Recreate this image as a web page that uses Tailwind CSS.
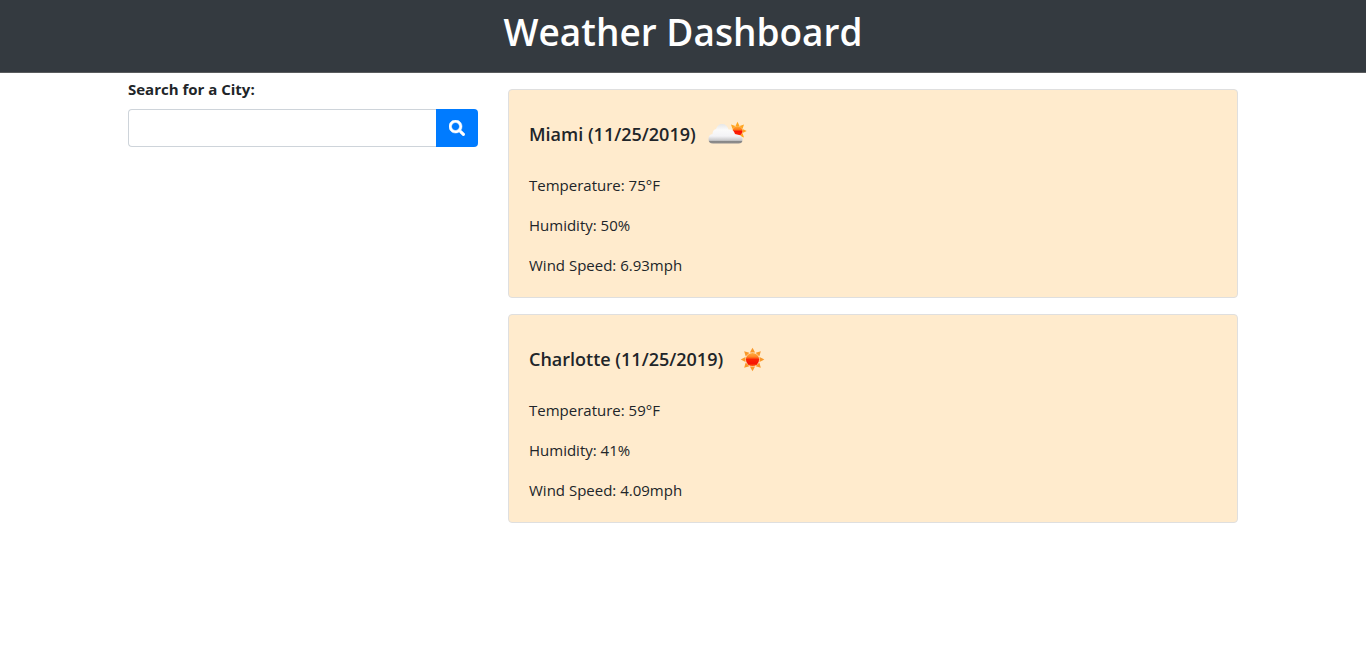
<!DOCTYPE html>
<html lang="en">
<head>
<meta charset="utf-8">
<meta name="viewport" content="width=device-width, initial-scale=1">
<title>Weather Dashboard</title>
<script src="https://cdn.jsdelivr.net/npm/@tailwindcss/browser@4"></script>
</head>
<body class="bg-white font-['Segoe_UI','Open_Sans','Noto_Sans',sans-serif] text-[15px] leading-6 text-[#212529]">
<header class="border-b border-[#5a5c5e] bg-[#343a40] pt-2 pb-4 text-center text-white">
  <h1 class="text-[37px] leading-[48px] font-semibold">Weather Dashboard</h1>
</header>
<main class="mx-auto grid max-w-[1140px] grid-cols-1 gap-x-[30px] px-[15px] md:grid-cols-[350px_1fr]">
  <form class="pt-1">
    <label for="city" class="mb-2 block font-bold">Search for a City:</label>
    <div class="flex h-[38px]">
      <input id="city" type="text" class="min-w-0 flex-1 rounded-l border border-r-0 border-[#ced4da] bg-white px-3 outline-none">
      <button type="button" aria-label="Search" class="flex w-[42px] items-center justify-center rounded-r bg-[#007bff] text-white">
        <svg class="size-4" viewBox="0 0 512 512" fill="currentColor" aria-hidden="true"><path stroke="currentColor" stroke-width="16" d="M505 442.700L405.300 343c-4.500-4.500-10.600-7-17-7H372c27.600-35.300 44-79.700 44-128C416 93.100 322.900 0 208 0S0 93.100 0 208s93.100 208 208 208c48.300 0 92.700-16.400 128-44v16.300c0 6.400 2.500 12.500 7 17l99.700 99.700c9.400 9.400 24.600 9.400 33.900 0l28.300-28.300c9.400-9.400 9.400-24.600.1-34zM208 336c-70.700 0-128-57.200-128-128 0-70.700 57.200-128 128-128 70.700 0 128 57.200 128 128 0 70.700-57.200 128-128 128z"/></svg>
      </button>
    </div>
  </form>
  <div class="flex flex-col gap-4 pt-4">
    <section class="rounded border border-[#dfdfdf] bg-[#ffebcd] p-5">
      <h2 class="mb-4 flex h-[47px] items-center gap-2 text-lg font-semibold">Miami (11/25/2019)
        <svg class="size-[50px]" viewBox="0 0 50 50" role="img" aria-label="Partly cloudy">
          <defs>
            <linearGradient id="cloud" x1="0" y1="0" x2="0" y2="1"><stop offset="0" stop-color="#e6e6e6"/><stop offset=".3" stop-color="#fafafa"/><stop offset=".62" stop-color="#f3f3f6"/><stop offset=".84" stop-color="#c8c8ca"/><stop offset=".9" stop-color="#858585"/><stop offset="1" stop-color="#929090"/></linearGradient>
            <linearGradient id="sun" x1="0" y1="0" x2="0" y2="1"><stop offset="0" stop-color="#ffb334"/><stop offset=".35" stop-color="#ff7a18"/><stop offset=".55" stop-color="#fa1604"/><stop offset="1" stop-color="#ff2a05"/></linearGradient>
          </defs>
          <g fill="#ffa51f" transform="translate(33.500 22)">
            <path id="tip" d="M0-9.200l2 4.200h-4z"/>
            <use href="#tip" transform="rotate(45)"/><use href="#tip" transform="rotate(90)"/><use href="#tip" transform="rotate(135)"/><use href="#tip" transform="rotate(-45)"/>
          </g>
          <circle cx="33.500" cy="22" r="5" fill="url(#sun)"/>
          <path fill="url(#cloud)" d="M9 34.500c-3 0-4.500-1.500-4.500-4.500S6 25.500 8.500 25c0-3 1.500-4.500 3.500-5 1-3 3-5 6-5 3.500 0 5.500 2 6.500 5.500 3-.5 5.500.5 6.500 4.500l4 1c2 .5 3.500 2 3.500 4.500 0 3-1.500 4-4 4z"/>
        </svg>
      </h2>
      <p class="mb-4">Temperature: 75°F</p>
      <p class="mb-4">Humidity: 50%</p>
      <p>Wind Speed: 6.93mph</p>
    </section>
    <section class="rounded border border-[#dfdfdf] bg-[#ffebcd] p-5">
      <h2 class="mb-4 flex h-[47px] items-center gap-1 text-lg font-semibold">Charlotte (11/25/2019)
        <svg class="size-[50px]" viewBox="0 0 50 50" role="img" aria-label="Clear sky">
          <defs>
            <linearGradient id="disc" x1="0" y1="0" x2="0" y2="1"><stop offset="0" stop-color="#ffb040"/><stop offset=".3" stop-color="#ff8524"/><stop offset=".5" stop-color="#fa2204"/><stop offset=".8" stop-color="#f71503"/><stop offset="1" stop-color="#ff5a0c"/></linearGradient>
          </defs>
          <g fill="#f9982a" transform="translate(25.500 25.500)">
            <path id="ray" d="M0-11.800l2.600 4.800h-5.200z"/>
            <use href="#ray" transform="rotate(45)"/><use href="#ray" transform="rotate(90)"/><use href="#ray" transform="rotate(135)"/><use href="#ray" transform="rotate(180)"/><use href="#ray" transform="rotate(225)"/><use href="#ray" transform="rotate(270)"/><use href="#ray" transform="rotate(315)"/>
          </g>
          <circle cx="25.500" cy="25.500" r="6.600" fill="url(#disc)"/>
        </svg>
      </h2>
      <p class="mb-4">Temperature: 59°F</p>
      <p class="mb-4">Humidity: 41%</p>
      <p>Wind Speed: 4.09mph</p>
    </section>
  </div>
</main>
</body>
</html>
